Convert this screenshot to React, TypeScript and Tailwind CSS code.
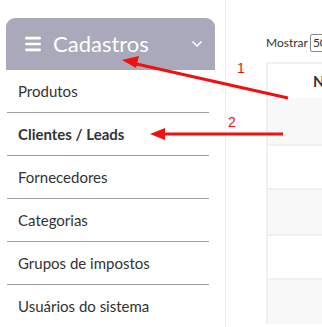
import { Menu, ChevronDown } from "lucide-react";

const items = [
    { label: "Produtos", bold: false },
    { label: "Clientes / Leads", bold: true },
    { label: "Fornecedores", bold: false },
    { label: "Categorias", bold: false },
    { label: "Grupos de impostos", bold: false },
    { label: "Usuários do sistema", bold: false },
];

const Arrows = () => {
    return <svg className="absolute inset-0 pointer-events-none" width={322} height={327} viewBox="0 0 322 327">
        <line x1={288} y1={98} x2={132} y2={63} stroke="#f01010" strokeWidth={3} />
        <polygon points="122,60 139,56 136,68" fill="#f01010" />
        <line x1={283} y1={134} x2={160} y2={134} stroke="#f01010" strokeWidth={3} />
        <polygon points="150,134 165,128 165,140" fill="#f01010" />
        <text x={237} y={73} fill="#f01010" fontSize={14} fontFamily="Liberation Sans, sans-serif">1</text>
        <text x={228} y={127} fill="#f01010" fontSize={14} fontFamily="Liberation Sans, sans-serif">2</text>
    </svg>
}

const App = () => {
    return <div className="relative flex w-[322px] h-[327px] overflow-hidden bg-white font-['Lato',sans-serif]">
        <div className="w-[226px] shrink-0 border-r border-[#efefef] pl-[6px] pt-[18px]">
            <div className="w-[209px] h-[52px] rounded-t-[9px] bg-[#a9a9bb] flex items-center pl-[17px] pr-[10px] text-white">
                <Menu size={20} strokeWidth={3.2} className="mr-[10px]" />
                <span className="text-[22px] leading-none">Cadastros</span>
                <ChevronDown size={16} strokeWidth={2.5} className="ml-auto" />
            </div>
            <div className="ml-[1px] w-[202px]">
                {items.map((item, i) => (
                    <div key={item.label} className={"h-[43px] flex items-center pl-[11px] text-[15px] text-[#333] " + (i < items.length - 1 ? "border-b border-[#9e9e9e]" : "") + (item.bold ? " font-bold" : "")}>
                        {item.label}
                    </div>
                ))}
            </div>
        </div>
        <div className="flex-1 pl-[40px] pt-[34px]">
            <div className="flex items-center h-[18px] text-[12px] text-[#333]">
                Mostrar
                <div className="ml-[2px] h-[18px] w-[30px] border border-[#888] rounded-[2px] px-[2px] leading-[16px]">50</div>
            </div>
            <div className="mt-[10px] border-l-2 border-[#f0f0f0]">
                <div className="h-[36px] bg-white border-t-2 border-[#f0f0f0] flex items-center pl-[45px] font-bold text-[15px] text-[#333]">N</div>
                <div className="h-[48px] bg-[#f8f8f8] border-b-2 border-[#f0f0f0]"></div>
                <div className="h-[44px] bg-white border-b-2 border-[#f0f0f0]"></div>
                <div className="h-[46px] bg-[#f8f8f8] border-b-2 border-[#f0f0f0]"></div>
                <div className="h-[44px] bg-white border-b-2 border-[#f0f0f0]"></div>
                <div className="h-[44px] bg-[#f8f8f8]"></div>
            </div>
        </div>
        <Arrows />
    </div>
}

export default App;
